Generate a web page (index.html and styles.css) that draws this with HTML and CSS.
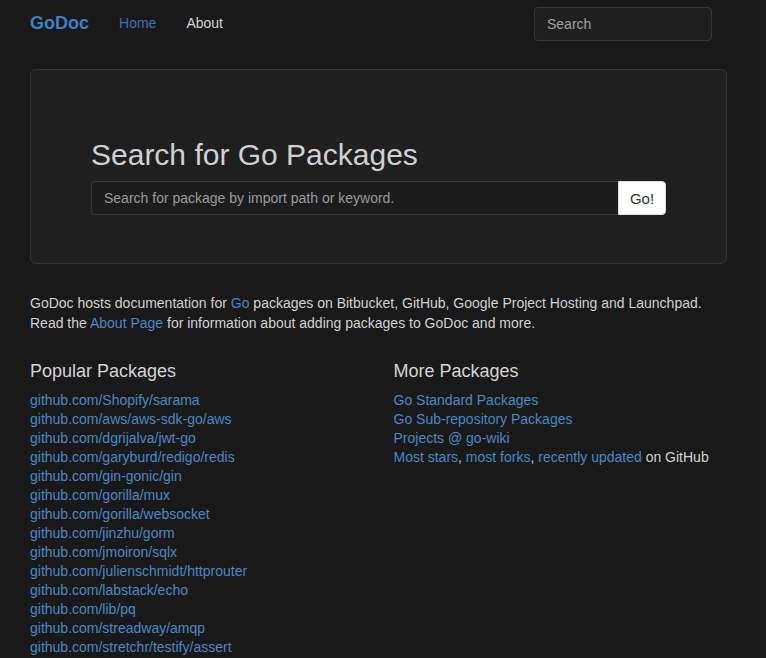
FILE: index.html
```html
<!DOCTYPE html>
<html>
<head>
<meta charset="utf-8">
<title>GoDoc</title>
<link rel="stylesheet" href="styles.css">
</head>
<body>
<nav class="navbar">
  <div class="nav-left">
    <a class="brand" href="#">GoDoc</a>
    <a class="nav-link active" href="#">Home</a>
    <a class="nav-link" href="#">About</a>
  </div>
  <input class="nav-search" type="text" placeholder="Search">
</nav>
<main class="container">
  <section class="jumbotron">
    <h2 class="jumbo-title">Search for Go Packages</h2>
    <form class="search-group">
      <input class="search-input" type="text" placeholder="Search for package by import path or keyword.">
      <button class="search-btn" type="button">Go!</button>
    </form>
  </section>
  <p class="intro">GoDoc hosts documentation for <a href="#">Go</a> packages on Bitbucket, GitHub, Google Project Hosting and Launchpad. Read the <a href="#">About Page</a> for information about adding packages to GoDoc and more.</p>
  <div class="cols">
    <div class="col">
      <h3 class="col-title">Popular Packages</h3>
      <ul class="pkg-list">
        <li><a href="#">github.com/Shopify/sarama</a></li>
        <li><a href="#">github.com/aws/aws-sdk-go/aws</a></li>
        <li><a href="#">github.com/dgrijalva/jwt-go</a></li>
        <li><a href="#">github.com/garyburd/redigo/redis</a></li>
        <li><a href="#">github.com/gin-gonic/gin</a></li>
        <li><a href="#">github.com/gorilla/mux</a></li>
        <li><a href="#">github.com/gorilla/websocket</a></li>
        <li><a href="#">github.com/jinzhu/gorm</a></li>
        <li><a href="#">github.com/jmoiron/sqlx</a></li>
        <li><a href="#">github.com/julienschmidt/httprouter</a></li>
        <li><a href="#">github.com/labstack/echo</a></li>
        <li><a href="#">github.com/lib/pq</a></li>
        <li><a href="#">github.com/streadway/amqp</a></li>
        <li><a href="#">github.com/stretchr/testify/assert</a></li>
        <li><a href="#">github.com/stretchr/testify/require</a></li>
      </ul>
    </div>
    <div class="col">
      <h3 class="col-title">More Packages</h3>
      <ul class="pkg-list">
        <li><a href="#">Go Standard Packages</a></li>
        <li><a href="#">Go Sub-repository Packages</a></li>
        <li><a href="#">Projects @ go-wiki</a></li>
        <li><a href="#">Most stars</a>, <a href="#">most forks</a>, <a href="#">recently updated</a> on GitHub</li>
      </ul>
    </div>
  </div>
</main>
</body>
</html>
```

FILE: styles.css
```css
html, body {
  margin: 0;
  padding: 0;
  background: #191919;
  color: #d2d2d2;
  font-family: "Liberation Sans", Arial, sans-serif;
  font-size: 14px;
  line-height: 20px;
}

a {
  color: #4a88c6;
  text-decoration: none;
}

.navbar {
  height: 47px;
  display: flex;
  align-items: center;
  justify-content: space-between;
  padding: 0 54px 0 15px;
  margin-bottom: 22px;
}

.nav-left {
  display: flex;
  align-items: center;
  margin-top: -2px;
}

.brand {
  font-size: 18px;
  font-weight: bold;
  color: #3f80c1;
  padding: 0 15px;
  line-height: 20px;
}

.nav-link {
  padding: 0 15px;
  color: #d6d6d6;
  line-height: 20px;
}

.nav-link.active {
  color: #3c6db4;
}

.nav-search {
  width: 178px;
  height: 34px;
  box-sizing: border-box;
  background: #1f1f1f;
  border: 1px solid #363636;
  border-radius: 4px;
  padding: 0 12px;
  font-family: "Liberation Sans", Arial, sans-serif;
  font-size: 14px;
  color: #ccc;
}

.nav-search::placeholder {
  color: #a0a0a0;
}

.container {
  margin-left: 30px;
  width: 697px;
}

.jumbotron {
  background: #1f1f1f;
  border: 1px solid #343434;
  border-radius: 6px;
  padding: 48px 60px 48px 60px;
  margin-bottom: 29px;
}

.jumbo-title {
  font-size: 30px;
  line-height: 33px;
  font-weight: normal;
  color: #d0d0d0;
  margin: 20px 0 10px;
}

.search-group {
  display: flex;
  margin: 0;
}

.search-input {
  flex: 1;
  height: 34px;
  box-sizing: border-box;
  background: #1c1c1c;
  border: 1px solid #363636;
  border-right: none;
  border-radius: 4px 0 0 4px;
  padding: 0 12px;
  font-family: "Liberation Sans", Arial, sans-serif;
  font-size: 14px;
  color: #ccc;
}

.search-input::placeholder {
  color: #9a9a9a;
}

.search-btn {
  width: 48px;
  height: 34px;
  background: #fff;
  border: 1px solid #ddd;
  border-radius: 0 4px 4px 0;
  font-family: "Liberation Sans", Arial, sans-serif;
  font-size: 15px;
  color: #333;
  padding: 0;
}

.intro {
  margin: 0 0 10px;
}

.cols {
  display: grid;
  grid-template-columns: 1fr 1fr;
  column-gap: 30px;
}

.col-title {
  font-size: 18px;
  line-height: 20px;
  font-weight: normal;
  color: #d4d4d4;
  margin: 18px 0 10px;
}

.pkg-list {
  list-style: none;
  margin: 0;
  padding: 0;
}

.pkg-list li {
  line-height: 19px;
}
```
